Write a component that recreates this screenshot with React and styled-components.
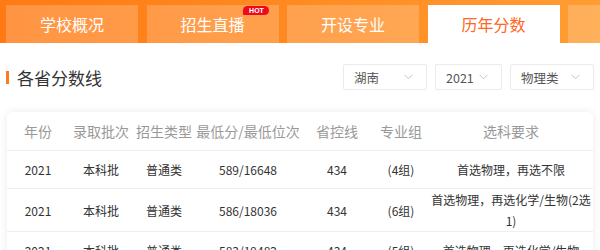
import styled, { createGlobalStyle } from "styled-components";

const GlobalStyle = createGlobalStyle`
    body {
        margin: 0;
        background: #fff;
        font-family: "Noto Sans CJK SC", "Noto Sans", sans-serif;
    }
`;

const tabs = [
    { label: "学校概况" },
    { label: "招生直播", hot: true },
    { label: "开设专业" },
    { label: "历年分数", active: true },
    { label: "" },
];

const filters = [
    { label: "湖南", width: 84 },
    { label: "2021", width: 67 },
    { label: "物理类", width: 84 },
];

const columns = ["年份", "录取批次", "招生类型", "最低分/最低位次", "省控线", "专业组", "选科要求"];

const rows = [
    ["2021", "本科批", "普通类", "589/16648", "434", "(4组)", "首选物理，再选不限"],
    ["2021", "本科批", "普通类", "586/18036", "434", "(6组)", "首选物理，再选化学/生物(2选1)"],
    ["2021", "本科批", "普通类", "583/19482", "434", "(5组)", "首选物理，再选化学/生物"],
];

function Chevron() {
    return (
        <svg width="9" height="6" viewBox="0 0 9 6">
            <polyline points="0.5,0.8 4.5,4.8 8.5,0.8" fill="none" stroke="#c4c4c4" strokeWidth="1" />
        </svg>
    );
}

export default function App() {
    return (
        <>
            <GlobalStyle />
            <Styled.Page>
                <Styled.TabBar>
                    {tabs.map((t, i) => (
                        <Styled.Tab key={i} $active={t.active}>
                            <Styled.TabLabel>
                                {t.label}
                                {t.hot && <Styled.Hot>HOT</Styled.Hot>}
                            </Styled.TabLabel>
                        </Styled.Tab>
                    ))}
                </Styled.TabBar>

                <Styled.Toolbar>
                    <Styled.Title>各省分数线</Styled.Title>
                    <Styled.Filters>
                        {filters.map((f) => (
                            <Styled.Select key={f.label} $width={f.width}>
                                <span>{f.label}</span>
                                <Chevron />
                            </Styled.Select>
                        ))}
                    </Styled.Filters>
                </Styled.Toolbar>

                <Styled.Card>
                    <Styled.HeadRow>
                        {columns.map((c) => (
                            <Styled.HeadCell key={c}>{c}</Styled.HeadCell>
                        ))}
                    </Styled.HeadRow>
                    {rows.map((r, i) => (
                        <Styled.Row key={i}>
                            {r.map((v, j) => (
                                <Styled.Cell key={j}>{v}</Styled.Cell>
                            ))}
                        </Styled.Row>
                    ))}
                </Styled.Card>
            </Styled.Page>
        </>
    );
}

const grid = `
    display: grid;
    grid-template-columns: 62px 64px 62px 106px 72px 56px 1fr;
    align-items: center;
    border-bottom: 1px solid #efefef;
`;

const Styled = {
    Page: styled.div`
        width: 600px;
        height: 250px;
        overflow: hidden;
    `,

    TabBar: styled.div`
        display: flex;
        gap: 8.5px;
        padding: 5px 0 0 6px;
        height: 43px;
        box-sizing: border-box;
        background: linear-gradient(90deg, #ff7a14 0%, #ff8a22 50%, #ff9d32 100%);
        overflow: hidden;
    `,

    Tab: styled.div`
        flex: 0 0 132px;
        height: 38px;
        display: flex;
        align-items: center;
        justify-content: center;
        font-size: 16px;
        color: ${(p) => (p.$active ? "#ff6726" : "#fff")};
        background: ${(p) => (p.$active ? "#fff" : "rgba(255, 255, 255, 0.2)")};
    `,

    TabLabel: styled.span`
        position: relative;
        line-height: 20px;
    `,

    Hot: styled.span`
        position: absolute;
        left: 63px;
        top: -8px;
        width: 26px;
        height: 9px;
        border-radius: 5px 5px 5px 1px;
        background: #ee0a1e;
        color: #fff;
        font-family: "Liberation Sans", sans-serif;
        font-size: 7px;
        font-weight: bold;
        line-height: 9px;
        text-align: center;
    `,

    Toolbar: styled.div`
        display: flex;
        align-items: center;
        justify-content: space-between;
        padding: 21px 6px 0 6px;
        margin-bottom: 22px;
    `,

    Title: styled.h2`
        display: flex;
        align-items: center;
        margin: 0;
        font-size: 17px;
        font-weight: normal;
        color: #333;

        &::before {
            content: "";
            width: 3px;
            height: 13px;
            margin-right: 8px;
            background: #ff7a1a;
        }
    `,

    Filters: styled.div`
        display: flex;
        gap: 8px;
    `,

    Select: styled.div`
        width: ${(p) => p.$width}px;
        height: 26px;
        box-sizing: border-box;
        display: flex;
        align-items: center;
        justify-content: space-between;
        padding: 0 13px 0 10px;
        border: 1px solid #ebebeb;
        border-radius: 2px;
        font-size: 12.5px;
        color: #555;
    `,

    Card: styled.div`
        margin: 0 7px;
        background: #fff;
        border-radius: 6px;
        box-shadow: 0 0 10px rgba(0, 0, 0, 0.08);
    `,

    HeadRow: styled.div`
        ${grid}
        min-height: 38px;
    `,

    HeadCell: styled.div`
        text-align: center;
        font-size: 14px;
        color: #999;
        white-space: nowrap;
    `,

    Row: styled.div`
        ${grid}
        min-height: 37px;
    `,

    Cell: styled.div`
        text-align: center;
        font-size: 12px;
        line-height: 21px;
        color: #333;
    `,
};
